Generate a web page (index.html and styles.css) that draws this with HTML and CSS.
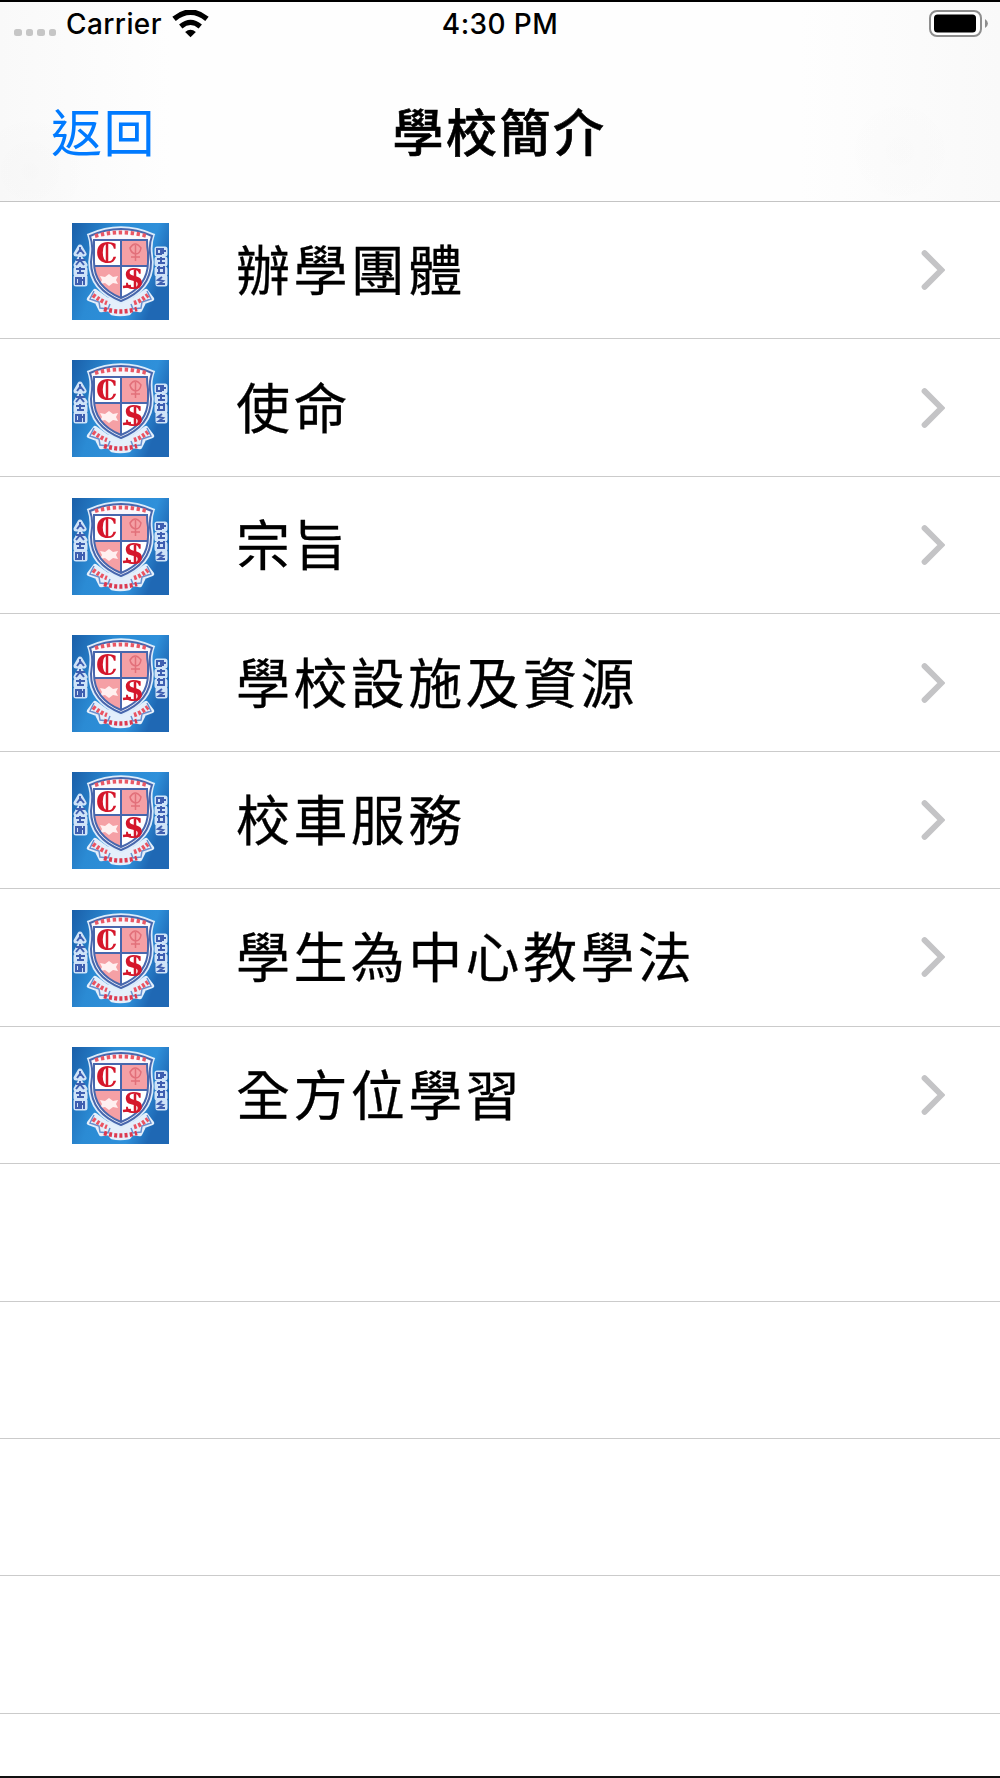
FILE: index.html
```
<!DOCTYPE html>
<html lang="zh-Hant">
<head>
    <meta charset="UTF-8">
    <meta name="viewport" content="width=device-width, initial-scale=1.0">
    <title>學校簡介</title>
    <link rel="stylesheet" href="styles.css">
</head>
<body>
    <div class="screen">
        <header class="header">
            <div class="status-bar">
                <div class="status-left">
                    <div class="signal"><i></i><i></i><i></i><i></i></div>
                    <span class="carrier">Carrier</span>
                    <svg class="wifi" viewBox="0 0 36 27">
                        <path d="M2 8.500Q18-4.500 34 8.500" fill="none" stroke="#000" stroke-width="5.300"/>
                        <path d="M8.500 16Q18 8 27.500 16" fill="none" stroke="#000" stroke-width="5"/>
                        <path d="M12.800 21.200Q18 17 23.200 21.200L18 26.500z"/>
                    </svg>
                </div>
                <span class="time">4:30 PM</span>
                <svg class="battery" viewBox="0 0 60 28">
                    <rect x="1" y="1" width="51" height="25" rx="7" fill="#fff" stroke="#8e8e8e" stroke-width="2"/>
                    <rect x="5" y="4.500" width="42" height="18" rx="3.500"/>
                    <path d="M56 9q3 2 3 4.500T56 18z" fill="#8e8e8e"/>
                </svg>
            </div>
            <nav class="nav-bar">
                <a class="back">返回</a>
                <h1>學校簡介</h1>
            </nav>
        </header>

        <ul class="list">
            <li class="row">
                <svg class="crest" viewBox="0 0 97 97">
                    <defs>
                        <linearGradient id="sky" x1="0" y1="0" x2="1" y2="0.35">
                            <stop offset="0" stop-color="#1a5fa9"/>
                            <stop offset="0.4" stop-color="#2b8bd4"/>
                            <stop offset="0.8" stop-color="#2f90da"/>
                            <stop offset="1" stop-color="#1f68b4"/>
                        </linearGradient>
                        <filter id="soft" x="0" y="0" width="1" height="1" color-interpolation-filters="sRGB"><feGaussianBlur stdDeviation="0.6"/></filter>
                    </defs>
                    <g id="crest">
                        <rect width="97" height="97" fill="url(#sky)"/>
                        <g filter="url(#soft)">
                            <rect width="97" height="97" fill="none"/>
                            <!-- side characters -->
                            <g fill="#cfe3f8" stroke="#cfe3f8" stroke-width="5" stroke-linejoin="round">
                                <path d="M8 24l4 7H4zM8 35l5 7H4zM4 46h9v5H4zM4 54h9v7H4z"/>
                                <path d="M85 26h8v5h-8zM85 36h8v5h-8zM85 46h8v5h-8zM86 54h7v7h-7z"/>
                            </g>
                            <g fill="none" stroke="#3f5fb0" stroke-width="2">
                                <path d="M8 24v3l-3 4M8 26l4 5M4 37h9M8 34v3l-4 5M8 37l4 5M4 46h9M8 44v7M5 50h7M4 55h3v6H4zM9 54v8M9 57h4M12 54v8"/>
                                <path d="M85 26h4v5h-4zM91 25v6M90 28h4M85 36h8M89 34v7M86 40h7M85 45h8M87 43v8M92 43v8M85 50h8M90 54l-4 3 5 1-4 3h6"/>
                            </g>
                            <!-- ribbon -->
                            <path d="M23 68l-6 8 8 3 4 8 8-1 3 4q8 2 17 0l3-4 8 1 4-8 8-3-6-8-11 8q-15 6-29 0z" fill="#e4effb" stroke="#e4effb" stroke-width="4.500" stroke-linejoin="round"/>
                            <path d="M22 68l-4 8 9 3 1 6 8 1 2-5M75 68l4 8-9 3-1 6-8 1-2-5" fill="none" stroke="#6a8fce" stroke-width="1.500"/>
                            <path d="M21 72q8 6 14 8M62 80q7-2 14-8" fill="none" stroke="#ea5462" stroke-width="4.500" stroke-dasharray="2.800 1.800"/>
                            <path d="M32 86q17 5 33 0" fill="none" stroke="#dc3a50" stroke-width="4.500" stroke-dasharray="3 2.200"/>
                            <!-- shield -->
                            <path d="M17 12Q33 5 49 5t32 7q-3 8-2 18l1 9q0 28-31 40Q18 67 18 39l1-9q1-10-2-18z" fill="#fff" stroke="#dcecfb" stroke-width="3.500"/>
                            <path d="M18 13Q33 6 49 6t31 7q-3 8-2 17l1 9q0 27-30 39Q19 66 19 39l1-9q1-9-2-17z" fill="#f9f8fc" stroke="#4867ad" stroke-width="2"/>
                            <path d="M23 13q26-7 52 0" fill="none" stroke="#ea5865" stroke-width="4" stroke-dasharray="3.400 2.600"/>
                            <path d="M22 17h53q0 7 1 12v10q0 25-27 36Q22 64 22 39V29z" fill="#fff"/>
                            <path d="M49 17h26l1 12v14H49z" fill="#f5a0a5"/>
                            <path d="M22 43h27v32Q24 65 22 43z" fill="#f5a0a5"/>
                            <path d="M58 25q5-8 11 0-1 6-5.500 6-4.500-1-5.500-6zM63.500 22v16M59 34h9" fill="none" stroke="#e2707a" stroke-width="1.500"/>
                            <path d="M28 53l5 1 4-3 4 3 5-1-2 4 2 4-5-1-4 3-4-3-5 1 2-4z" fill="#fff0f0"/>
                            <path d="M22 17h53q0 7 1 12v10q0 25-27 36Q22 64 22 39V29zM49 17v58M22 43h54" fill="none" stroke="#4867ad" stroke-width="2"/>
                            <text x="24" y="40" class="crest-letter">C</text>
                            <text x="52" y="66" class="crest-letter">S</text>
                            <path d="M35 21v18M51 64l8-1M63 47v18" fill="none" stroke="#d5172b" stroke-width="2.500"/>
                        </g>
                    </g>
                </svg>
                <span>辦學團體</span>
                <svg class="chevron" viewBox="0 0 22 38">
                    <path id="chevron" d="M3 3l16 16L3 35" fill="none" stroke="#c4c4c6" stroke-width="5.600" stroke-linecap="round"/>
                </svg>
            </li>
            <li class="row">
                <svg class="crest" viewBox="0 0 97 97"><use href="#crest"/></svg>
                <span>使命</span>
                <svg class="chevron" viewBox="0 0 22 38"><use href="#chevron"/></svg>
            </li>
            <li class="row">
                <svg class="crest" viewBox="0 0 97 97"><use href="#crest"/></svg>
                <span>宗旨</span>
                <svg class="chevron" viewBox="0 0 22 38"><use href="#chevron"/></svg>
            </li>
            <li class="row">
                <svg class="crest" viewBox="0 0 97 97"><use href="#crest"/></svg>
                <span>學校設施及資源</span>
                <svg class="chevron" viewBox="0 0 22 38"><use href="#chevron"/></svg>
            </li>
            <li class="row">
                <svg class="crest" viewBox="0 0 97 97"><use href="#crest"/></svg>
                <span>校車服務</span>
                <svg class="chevron" viewBox="0 0 22 38"><use href="#chevron"/></svg>
            </li>
            <li class="row">
                <svg class="crest" viewBox="0 0 97 97"><use href="#crest"/></svg>
                <span>學生為中心教學法</span>
                <svg class="chevron" viewBox="0 0 22 38"><use href="#chevron"/></svg>
            </li>
            <li class="row">
                <svg class="crest" viewBox="0 0 97 97"><use href="#crest"/></svg>
                <span>全方位學習</span>
                <svg class="chevron" viewBox="0 0 22 38"><use href="#chevron"/></svg>
            </li>
            <li class="row"></li>
            <li class="row"></li>
            <li class="row"></li>
            <li class="row"></li>
        </ul>
    </div>
</body>
</html>
```
FILE: styles.css
```
* {
    box-sizing: border-box;
}
body {
    margin: 0;
    background-color: #fff;
    color: #000;
    font-family: "Noto Sans CJK TC", sans-serif;
}
.screen {
    height: 1778px;
    overflow: hidden;
    border-top: 2px solid #000;
    border-bottom: 2px solid #111;
}
.header {
    height: 200px;
    border-bottom: 1px solid #c4c4c4;
    background:
        radial-gradient(circle at 3% 85%, rgba(0, 0, 0, 0.01), transparent 60px),
        radial-gradient(circle at 90% 75%, rgba(0, 0, 0, 0.008), transparent 60px),
        linear-gradient(90deg, #f9f9f9, #fefefe 17%, #fefefe 80%, #f9f9f9);
}
.status-bar {
    display: grid;
    grid-template-columns: 1fr auto 1fr;
    align-items: center;
    height: 44px;
    padding: 0 11px 0 14px;
    font-family: Inter, sans-serif;
    font-size: 28px;
    font-weight: 500;
    letter-spacing: 0.400px;
}
.status-left {
    display: flex;
    align-items: center;
}
.signal {
    display: flex;
    gap: 4px;
    padding-top: 17px;
}
.signal i {
    width: 7.500px;
    height: 7.500px;
    border-radius: 2.500px;
    background-color: #c6c6c6;
}
.carrier {
    margin-left: 10px;
}
.wifi {
    width: 37px;
    height: 28px;
    margin-left: 10px;
}
.time {
    margin-right: 3px;
}
.battery {
    justify-self: end;
    width: 60px;
    height: 28px;
}
.nav-bar {
    display: grid;
    grid-template-columns: 1fr auto 1fr;
    align-items: center;
    height: 155px;
    padding: 13px 52px 0 51px;
}
.back {
    color: #007aff;
    font-size: 51px;
    letter-spacing: 1.500px;
    line-height: 1;
}
h1 {
    margin: 0;
    font-size: 51px;
    font-weight: 500;
    letter-spacing: 2.500px;
    line-height: 1;
    -webkit-text-stroke: 0.600px #000;
}
.list {
    margin: 0;
    padding: 0;
    list-style: none;
}
.row {
    display: flex;
    align-items: center;
    height: 137.450px;
    padding: 2px 55px 0 72px;
    border-bottom: 1px solid #cbcbcb;
    font-size: 54px;
    letter-spacing: 3.400px;
    line-height: 1;
}
.row span {
    flex: 1;
    margin-left: 67px;
    padding-bottom: 6px;
    -webkit-text-stroke: 0.300px #000;
}
.crest {
    width: 97px;
    height: 97px;
}
.chevron {
    width: 24px;
    height: 40px;
    margin-bottom: 2px;
}
.crest-letter {
    font-family: "DejaVu Serif", serif;
    font-size: 27px;
    font-weight: bold;
    letter-spacing: 0;
    fill: #d5172b;
}
```
